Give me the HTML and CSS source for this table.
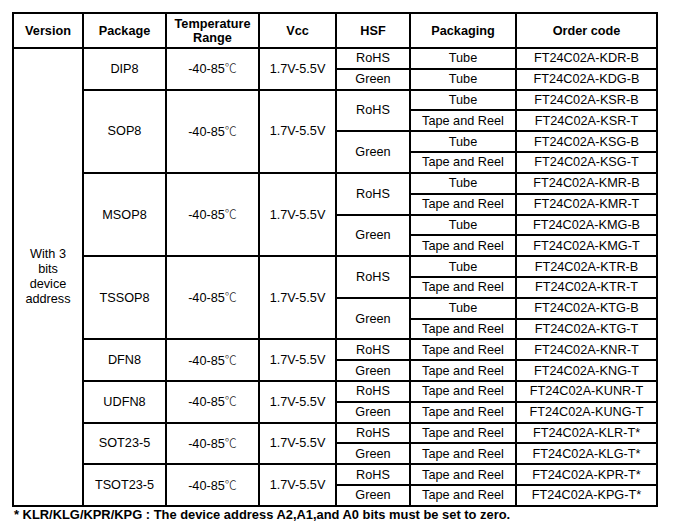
FILE: index.html
```html
<!DOCTYPE html>
<html>
<head>
<meta charset="utf-8">
<link rel="stylesheet" href="styles.css">
</head>
<body>
<div class="page">
<table class="spec">
<colgroup>
<col class="c1"><col class="c2"><col class="c3"><col class="c4"><col class="c5"><col class="c6"><col class="c7">
</colgroup>
<thead>
<tr class="head">
<th>Version</th><th>Package</th><th>Temperature<br>Range</th><th>Vcc</th><th>HSF</th><th>Packaging</th><th>Order code</th>
</tr>
</thead>
<tbody>
<tr><td rowspan="22" class="ver">With 3<br>bits<br>device<br>address</td><td rowspan="2">DIP8</td><td rowspan="2">-40-85<span class="deg">℃</span></td><td rowspan="2">1.7V-5.5V</td><td>RoHS</td><td>Tube</td><td>FT24C02A-KDR-B</td></tr>
<tr><td>Green</td><td>Tube</td><td>FT24C02A-KDG-B</td></tr>

<tr><td rowspan="4">SOP8</td><td rowspan="4">-40-85<span class="deg">℃</span></td><td rowspan="4">1.7V-5.5V</td><td rowspan="2">RoHS</td><td>Tube</td><td>FT24C02A-KSR-B</td></tr>
<tr><td>Tape and Reel</td><td>FT24C02A-KSR-T</td></tr>
<tr><td rowspan="2">Green</td><td>Tube</td><td>FT24C02A-KSG-B</td></tr>
<tr><td>Tape and Reel</td><td>FT24C02A-KSG-T</td></tr>

<tr><td rowspan="4">MSOP8</td><td rowspan="4">-40-85<span class="deg">℃</span></td><td rowspan="4">1.7V-5.5V</td><td rowspan="2">RoHS</td><td>Tube</td><td>FT24C02A-KMR-B</td></tr>
<tr><td>Tape and Reel</td><td>FT24C02A-KMR-T</td></tr>
<tr><td rowspan="2">Green</td><td>Tube</td><td>FT24C02A-KMG-B</td></tr>
<tr><td>Tape and Reel</td><td>FT24C02A-KMG-T</td></tr>

<tr><td rowspan="4">TSSOP8</td><td rowspan="4">-40-85<span class="deg">℃</span></td><td rowspan="4">1.7V-5.5V</td><td rowspan="2">RoHS</td><td>Tube</td><td>FT24C02A-KTR-B</td></tr>
<tr><td>Tape and Reel</td><td>FT24C02A-KTR-T</td></tr>
<tr><td rowspan="2">Green</td><td>Tube</td><td>FT24C02A-KTG-B</td></tr>
<tr><td>Tape and Reel</td><td>FT24C02A-KTG-T</td></tr>

<tr><td rowspan="2">DFN8</td><td rowspan="2">-40-85<span class="deg">℃</span></td><td rowspan="2">1.7V-5.5V</td><td>RoHS</td><td>Tape and Reel</td><td>FT24C02A-KNR-T</td></tr>
<tr><td>Green</td><td>Tape and Reel</td><td>FT24C02A-KNG-T</td></tr>

<tr><td rowspan="2">UDFN8</td><td rowspan="2">-40-85<span class="deg">℃</span></td><td rowspan="2">1.7V-5.5V</td><td>RoHS</td><td>Tape and Reel</td><td>FT24C02A-KUNR-T</td></tr>
<tr><td>Green</td><td>Tape and Reel</td><td>FT24C02A-KUNG-T</td></tr>

<tr><td rowspan="2">SOT23-5</td><td rowspan="2">-40-85<span class="deg">℃</span></td><td rowspan="2">1.7V-5.5V</td><td>RoHS</td><td>Tape and Reel</td><td>FT24C02A-KLR-T*</td></tr>
<tr><td>Green</td><td>Tape and Reel</td><td>FT24C02A-KLG-T*</td></tr>

<tr><td rowspan="2">TSOT23-5</td><td rowspan="2">-40-85<span class="deg">℃</span></td><td rowspan="2">1.7V-5.5V</td><td>RoHS</td><td>Tape and Reel</td><td>FT24C02A-KPR-T*</td></tr>
<tr><td>Green</td><td>Tape and Reel</td><td>FT24C02A-KPG-T*</td></tr>
</tbody>
</table>
<p class="note">* KLR/KLG/KPR/KPG : The device address A2,A1,and A0 bits must be set to zero.</p>
</div>
</body>
</html>
```

FILE: styles.css
```css
html, body {
  margin: 0;
  padding: 0;
  background: #ffffff;
}
.page {
  padding: 12px 0 0 12px;
  font-family: "Liberation Sans", Arial, "Noto Sans CJK SC", sans-serif;
  color: #000000;
}
.spec {
  border-collapse: collapse;
  table-layout: fixed;
  width: 644px;
  font-size: 12.7px;
}
.c1 { width: 70px; }
.c2 { width: 83px; }
.c3 { width: 93px; }
.c4 { width: 77px; }
.c5 { width: 74px; }
.c6 { width: 106px; }
.c7 { width: 141px; }
.spec th, .spec td {
  border: 2px solid #000000;
  text-align: center;
  vertical-align: middle;
  padding: 0;
  line-height: 14px;
  white-space: nowrap;
}
.spec th {
  font-weight: bold;
  font-size: 12.7px;
}
.head {
  height: 35px;
}
.spec tbody tr {
  height: 20.82px;
}
.spec td.ver {
  line-height: 15px;
}
.deg {
  font-family: "Noto Sans CJK SC", sans-serif;
  font-weight: 300;
  font-size: 12px;
  color: #222222;
}
.note {
  margin: 0;
  padding: 1px 0 0 2px;
  font-weight: bold;
  font-size: 12.9px;
  line-height: 14px;
}
```
